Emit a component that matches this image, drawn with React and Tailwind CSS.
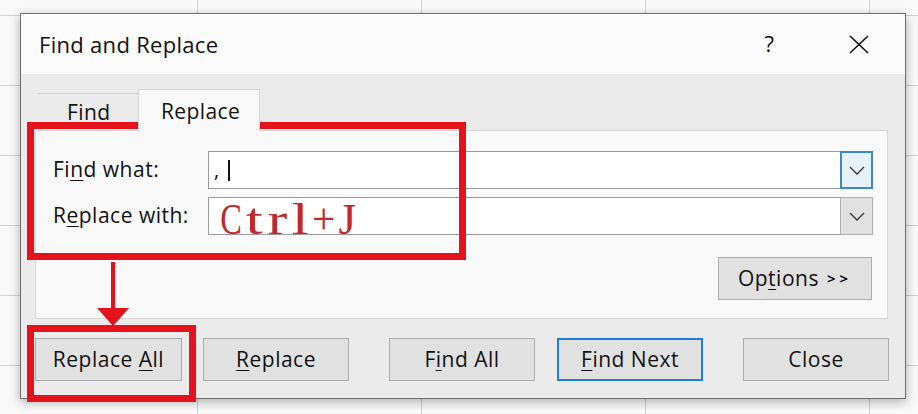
import React from "react";

function Chevron() {
  return (
    <svg width="16" height="9" viewBox="0 0 16 9" fill="none">
      <polyline points="1,1 8,8 15,1" stroke="#333" strokeWidth="1.3" />
    </svg>
  );
}

function Btn({ children, className = "", w = "w-[147px]" }) {
  return (
    <div
      className={`${w} h-[43px] flex items-center justify-center bg-[#e1e1e1] text-[21px] tracking-[0.5px] text-[#111] ${className}`}
    >
      {children}
    </div>
  );
}

const U = ({ children }) => (
  <span className="underline underline-offset-[3px] decoration-1">{children}</span>
);

const CTRL = [
  { c: "C", s: "scale-x-[0.72]" },
  { c: "t", s: "scale-x-[1.35]" },
  { c: "r", s: "scale-x-[1.3]" },
  { c: "l", s: "scale-x-[1.35]" },
  { c: "+", s: "scale-x-[0.9]" },
  { c: "J", s: "scale-x-[1]" },
];

export default function App() {
  return (
    <div className="relative w-[918px] h-[414px] overflow-hidden bg-[#f9f9f9] bg-[linear-gradient(to_right,#d2d2d2_1px,transparent_1px),linear-gradient(to_bottom,#d2d2d2_1px,transparent_1px)] bg-[size:224px_70px] bg-[position:197px_15px] font-['Open_Sans',sans-serif]">
      {/* dialog */}
      <div className="absolute left-[20px] top-[13px] w-[886px] h-[386px] border border-[#6e6e6e] bg-[#ebebeb] shadow-[0_3px_10px_rgba(0,0,0,0.3)] flex flex-col">
        {/* title bar */}
        <div className="h-[60px] bg-[#fbfbfb] flex items-center pl-[18px] pr-[36px] text-[#111]">
          <div className="flex-1 text-[22px] tracking-[0.3px]">Find and Replace</div>
          <div className="text-[22px] leading-none pb-[2px]">?</div>
          <svg className="ml-[75px]" width="20" height="19" viewBox="0 0 20 19">
            <line x1="1" y1="1" x2="19" y2="18" stroke="#111" strokeWidth="1.6" />
            <line x1="19" y1="1" x2="1" y2="18" stroke="#111" strokeWidth="1.6" />
          </svg>
        </div>
        {/* body */}
        <div className="flex-1 flex flex-col pl-[14px] pr-[14px]">
          {/* tabs */}
          <div className="mt-[15px] h-[41px] flex items-end relative z-10">
            <div className="ml-[2px] w-[101px] h-[37px] border-t border-[#d6d6d6] pl-[30px] pt-[5px] text-[21px] tracking-[0.4px] leading-[27px] text-[#111]">
              Find
            </div>
            <div className="w-[122px] h-[42px] -mb-px bg-[#f9f9f9] border border-b-0 border-[#d6d6d6] pl-[22px] pt-[8px] text-[21px] tracking-[0.4px] leading-[27px] text-[#111]">
              Replace
            </div>
          </div>
          {/* panel */}
          <div className="mr-[3px] h-[189px] bg-[#f9f9f9] border border-[#d6d6d6] flex flex-col pt-[20px] pr-[14px]">
            <div className="flex items-center h-[38px]">
              <div className="w-[172px] pl-[17px] text-[21px] tracking-[0.5px] text-[#111]">
                Fi<U>n</U>d what:
              </div>
              <div className="flex-1 h-[38px] flex bg-white border border-[#9a9a9a]">
                <div className="flex-1 flex items-center pl-[5px] text-[20px] text-[#111]">
                  <span className="leading-none">,</span>
                  <span className="ml-[9px] w-[1.5px] h-[21px] bg-[#111]" />
                </div>
                <div className="w-[33px] -my-px -mr-px flex items-center justify-center bg-[#e5f1fb] border-2 border-[#3f86c9]">
                  <Chevron />
                </div>
              </div>
            </div>
            <div className="flex items-center h-[38px] mt-[8px]">
              <div className="w-[172px] pl-[17px] text-[21px] tracking-[0.5px] text-[#111]">
                R<U>e</U>place with:
              </div>
              <div className="flex-1 h-[38px] flex bg-white border border-[#9a9a9a]">
                <div className="flex-1 flex items-center pl-[10px]">
                  <div className="flex font-['Liberation_Serif',serif] text-[45px] leading-[38px] text-[#c1272b] translate-y-[3px]">
                    {CTRL.map((o, i) => (
                      <span key={i} className="w-[23.3px] flex justify-center">
                        <span className={`inline-block ${o.s}`}>{o.c}</span>
                      </span>
                    ))}
                  </div>
                </div>
                <div className="w-[33px] -my-px -mr-px flex items-center justify-center bg-[#e1e1e1] border border-[#adadad]">
                  <Chevron />
                </div>
              </div>
            </div>
            <div className="mt-[22px] self-end mr-[1px]">
              <Btn w="w-[154px]" className="h-[41px] border border-[#adadad]">
                <span>
                  Op<U>t</U>ions
                </span>
                <span className="ml-[8px] text-[15px] font-bold tracking-[4px]">{">>"}</span>
              </Btn>
            </div>
          </div>
          {/* bottom buttons */}
          <div className="mt-[19px] flex">
            <Btn className="border border-[#adadad]">
              Replace <span className="ml-[6px]"><U>A</U>ll</span>
            </Btn>
            <Btn w="w-[146px]" className="ml-[21px] border border-[#adadad]">
              <U>R</U>eplace
            </Btn>
            <Btn w="w-[146px]" className="ml-[40px] border border-[#adadad]">
              F<U>i</U>nd All
            </Btn>
            <Btn w="w-[146px]" className="ml-[22px] border-2 border-[#1f7fd6]">
              <U>F</U>ind Next
            </Btn>
            <Btn w="w-[146px]" className="ml-[40px] border border-[#adadad]">
              Close
            </Btn>
          </div>
        </div>
      </div>

      {/* annotations */}
      <div className="absolute left-[27px] top-[122px] w-[439px] h-[138px] border-[7px] border-[#e3121b]" />
      <div className="absolute left-[27px] top-[325px] w-[169px] h-[77px] border-[7px] border-[#e3121b]" />
      <svg className="absolute left-[95px] top-[262px]" width="36" height="66" viewBox="0 0 36 66">
        <rect x="16" y="0" width="4" height="48" fill="#e3121b" />
        <polygon points="2,46 34,46 18,64" fill="#e3121b" />
      </svg>
    </div>
  );
}
